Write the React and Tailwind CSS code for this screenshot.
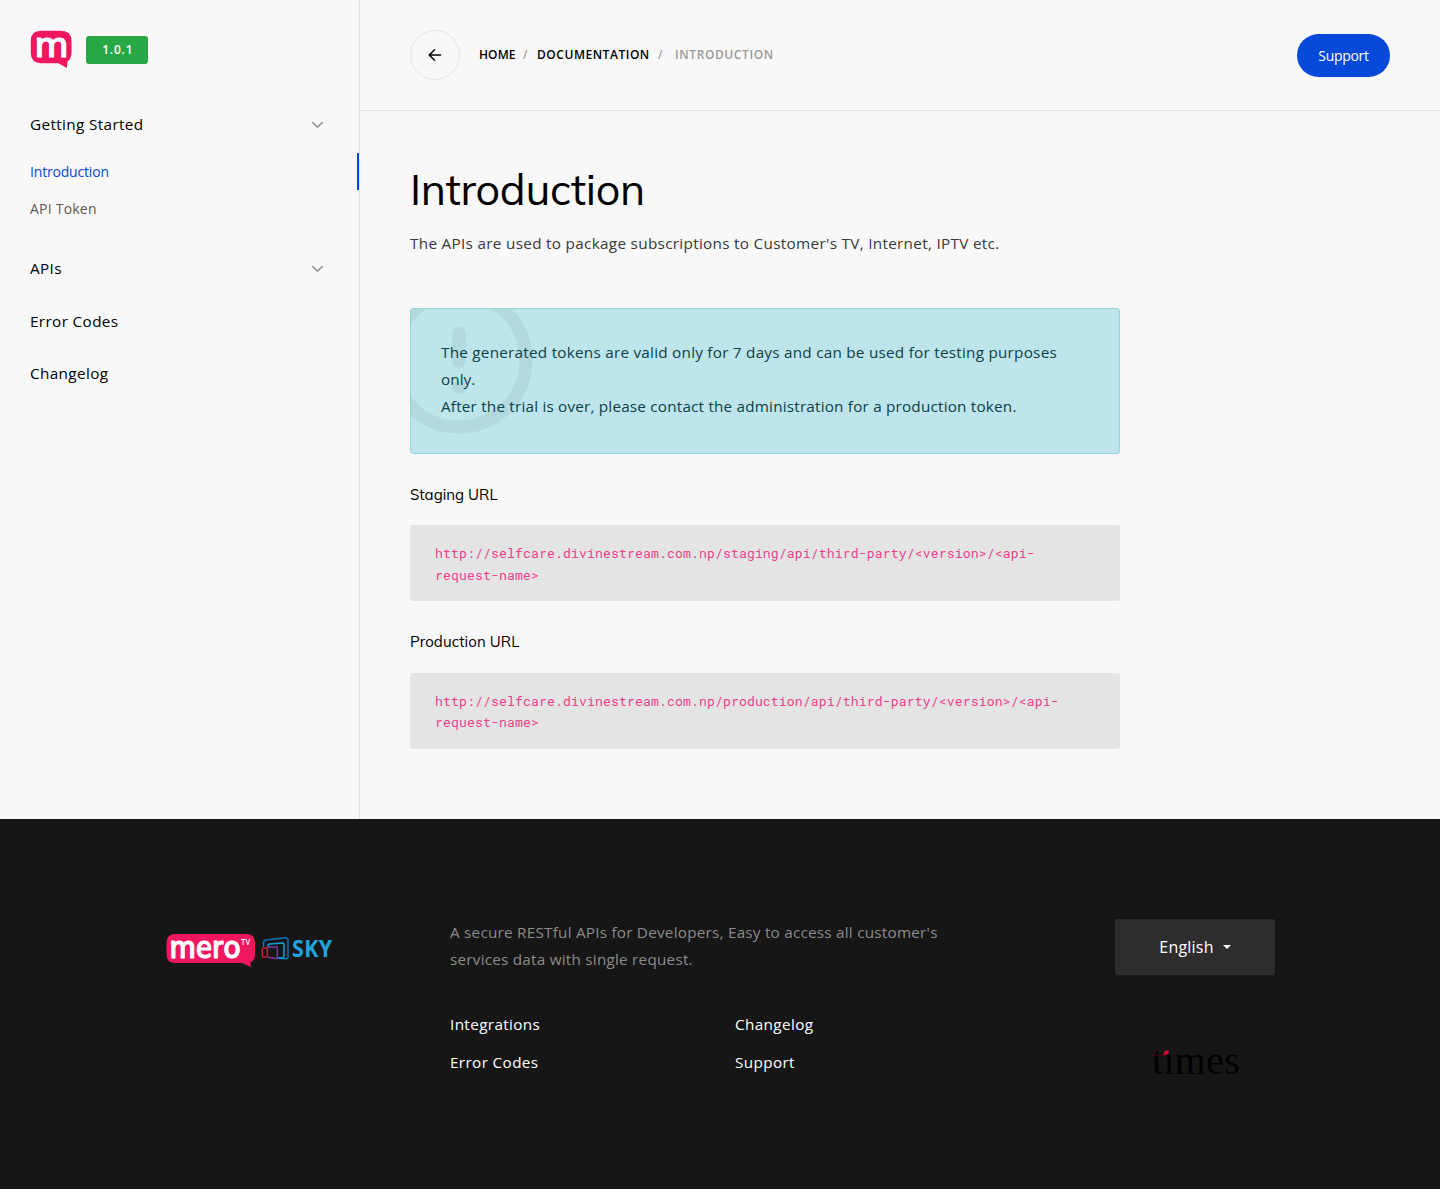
import React from "react";

function MeroMark() {
  return (
    <svg width="42" height="39" viewBox="0 0 42 39" className="block overflow-visible">
      <path d="M11 .7H31Q41.5 .7 41.5 11V22Q41.5 29 37.5 31.5L36.8 38L28.5 33.2H11Q.8 33 .8 23V11Q.8.7 11 .7Z" fill="#f0175f" />
      <text x="4.8" y="26.8" fontFamily="Muli, Mulish, sans-serif" fontWeight="600" fontSize="37" fill="#fff" stroke="#fff" strokeWidth="1" strokeLinejoin="round" textLength="34" lengthAdjust="spacingAndGlyphs">m</text>
    </svg>
  );
}

function Chevron() {
  return (
    <svg width="13" height="8" viewBox="0 0 13 8" className="mr-[5px]">
      <path d="M1.2 1.2L6.5 6.2L11.8 1.2" fill="none" stroke="#999" strokeWidth="1.7" />
    </svg>
  );
}

function FooterLogo() {
  return (
    <svg width="168" height="36" viewBox="0 0 168 36" className="block overflow-visible">
      <path d="M10 1H81Q90 1 90 10V21Q90 27 85.5 29.3L85.8 34L77 30H10Q1.5 30 1.5 21V10Q1.5 1 10 1Z" fill="#f0175f" />
      <text x="4.8" y="25" fontFamily="Muli, Mulish, sans-serif" fontWeight="600" fontSize="33" fill="#fff" stroke="#fff" strokeWidth="1.2" strokeLinejoin="round" textLength="71" lengthAdjust="spacingAndGlyphs">mero</text>
      <text x="76" y="12.3" fontFamily="Open Sans" fontWeight="600" fontSize="8" fill="#fff" textLength="9.5" lengthAdjust="spacingAndGlyphs">TV</text>
      <g fill="none" strokeWidth="1.5" strokeLinejoin="round">
        <path d="M98.5 14V10Q98.5 7.3 101 7L120.5 4.8Q123 4.6 123 7V23.5Q123 26 120.5 25.8L114 25.2" stroke="#0874bd" />
        <path d="M103 14V12Q103 11.2 104.5 11L117.5 10Q119 10 119 11.5V23Q119 25 117 25L113 24.8" stroke="#109fda" />
        <path d="M102.5 14.2L112.3 14V25.8L102.5 24.2" stroke="#743b94" />
        <rect x="97.3" y="15" width="5" height="9" rx="1.5" stroke="#c32035" />
      </g>
      <text x="127" y="24" fontFamily="Open Sans" fontWeight="700" fontSize="22.3" fill="#21a5df" textLength="40.5" lengthAdjust="spacingAndGlyphs">SKY</text>
    </svg>
  );
}

function TimesLogo() {
  return (
    <svg width="90" height="30" viewBox="0 0 90 30" className="block overflow-visible">
      <text x="1" y="26" fontFamily="Liberation Serif" fontSize="41" fill="#020202" textLength="88" lengthAdjust="spacingAndGlyphs">tımes</text>
      <path d="M1 7.7H12" stroke="#6a0a1e" strokeWidth=".7" />
      <path d="M12.5 7.3L13.7 3.3Q16 1.2 18.2 3.4Q18 6 15.3 6.2Q14.9 7.8 12.5 7.3Z" fill="#dc0633" />
    </svg>
  );
}

function NavGroup({ label }) {
  return (
    <div className="flex h-[27px] items-center justify-between pr-[30px]">
      <a>{label}</a>
      <Chevron />
    </div>
  );
}

function CodeBlock({ lines }) {
  return (
    <div className="h-[76px] rounded-[3px] bg-[#e4e4e4] px-[25px] pt-[18px] font-['Roboto_Mono','DejaVu_Sans_Mono',monospace] text-[13.125px] leading-[21.5px] tracking-[0.13px] text-[#e83e8c]">
      {lines.map((line) => (
        <div key={line} className="whitespace-nowrap">{line}</div>
      ))}
    </div>
  );
}

export default function App() {
  return (
    <div className="w-[1440px] bg-[#f8f8f8] font-['Open_Sans',sans-serif] text-[15.3px] leading-[27px] tracking-[0.36px] text-black">
      <div className="flex h-[819px]">
        <aside className="w-[360px] shrink-0 border-r border-[#e1e1e1] pl-[30px] pt-[30px]">
          <div className="flex h-10 items-start">
            <MeroMark />
            <span className="ml-[14px] mt-[6px] h-7 w-[62px] rounded-[3px] bg-[#28a745] pl-[1.5px] text-center text-[12px] font-semibold leading-[27px] tracking-[0.8px] text-white">1.0.1</span>
          </div>
          <nav className="pt-[41px]">
            <NavGroup label="Getting Started" />
            <div className="mt-[15px] text-[14px] leading-[37px]">
              <a className="block h-[37px] border-r-2 border-[#0549da] tracking-[-0.18px] text-[#0549da]">Introduction</a>
              <a className="block h-[37px] tracking-[0.22px] text-[#595959]">API Token</a>
            </div>
            <div className="mt-[28px]"><NavGroup label="APIs" /></div>
            <a className="mt-[26px] block">Error Codes</a>
            <a className="mt-[25px] block">Changelog</a>
          </nav>
        </aside>
        <main className="flex-1">
          <header className="flex h-[111px] items-center justify-between border-b border-[#e1e1e1] px-[50px]">
            <div className="flex items-center">
              <button className="flex h-[50px] w-[50px] items-center justify-center rounded-full border border-[#e4e4e4]">
                <svg width="14" height="14" viewBox="0 0 14 14" fill="none" stroke="#000" strokeWidth="1.5" strokeLinecap="round" strokeLinejoin="round">
                  <path d="M12.6 7H1.2M6.6 1.8L1.2 7L6.6 12.2" />
                </svg>
              </button>
              <div className="mb-[2px] ml-[19px] flex whitespace-nowrap text-[12px] font-semibold tracking-[0.6px]">
                <span className="w-[44px] tracking-[0.1px]">HOME</span>
                <span className="w-[14px] font-normal text-[#888]">/</span>
                <span className="w-[121px] tracking-[0.53px]">DOCUMENTATION</span>
                <span className="w-[17px] font-normal text-[#888]">/</span>
                <span className="text-[#999]">INTRODUCTION</span>
              </div>
            </div>
            <button className="mt-px h-[43px] w-[93px] rounded-full bg-[#0549da] text-[14px] tracking-[-0.3px] text-white">Support</button>
          </header>
          <article className="w-[760px] pl-[50px]">
            <h1 className="pt-[50px] font-['Muli','Mulish',sans-serif] text-[43px] leading-[56px] tracking-[-0.28px]">Introduction</h1>
            <p className="mt-[13px] whitespace-nowrap tracking-[0.3px] text-[#383838]">The APIs are used to package subscriptions to Customer's TV, Internet, IPTV etc.</p>
            <div className="relative mt-[51px] h-[146px] overflow-hidden rounded-[3px] border border-[#94d5de] bg-[#bee5eb] px-[30px] pt-[30px] text-[#0c4047]">
              <svg className="absolute -left-[26px] -top-[23px]" width="148" height="148" viewBox="0 0 148 148" fill="none" stroke="#b3d9df">
                <circle cx="74" cy="74" r="67" strokeWidth="13" />
                <path d="M74 48V75M74 101V101.1" strokeWidth="14" strokeLinecap="round" />
              </svg>
              <div className="relative whitespace-nowrap">
                <div className="tracking-[0.235px]">The generated tokens are valid only for 7 days and can be used for testing purposes</div>
                <div className="tracking-[0.05px]">only.</div>
                <div className="tracking-[0.187px]">After the trial is over, please contact the administration for a production token.</div>
              </div>
            </div>
            <h2 className="mb-[17px] mt-[27px] font-['Muli','Mulish',sans-serif] text-[15px] tracking-[0.02px]">Staging URL</h2>
            <CodeBlock lines={["http://selfcare.divinestream.com.np/staging/api/third-party/<version>/<api-", "request-name>"]} />
            <h2 className="mb-[17.5px] mt-[27px] font-['Muli','Mulish',sans-serif] text-[15px] tracking-[0.1px]">Production URL</h2>
            <CodeBlock lines={["http://selfcare.divinestream.com.np/production/api/third-party/<version>/<api-", "request-name>"]} />
          </article>
        </main>
      </div>
      <footer className="flex h-[370px] bg-[#161616] pl-[165px] pt-[100px]">
        <div className="w-[285px] pt-[14px]"><FooterLogo /></div>
        <div className="w-[665px]">
          <p className="whitespace-nowrap tracking-[0.22px] text-[#8c8c8c]">A secure RESTful APIs for Developers, Easy to access all customer's<br />services data with single request.</p>
          <div className="mt-[38px] grid w-[570px] grid-cols-2 gap-y-[11px] text-white">
            <a>Integrations</a><a>Changelog</a>
            <a>Error Codes</a><a>Support</a>
          </div>
        </div>
        <div className="w-[160px]">
          <button className="flex h-[56px] w-[160px] items-center justify-center gap-[9px] rounded-[3px] bg-[#2d2d2d] text-[16px] tracking-[0.2px] text-white">
            English
            <svg width="8" height="4" viewBox="0 0 8 4"><path d="M0 0H8L4 4Z" fill="#fff" /></svg>
          </button>
          <div className="ml-[36px] mt-[73px]"><TimesLogo /></div>
        </div>
      </footer>
    </div>
  );
}
